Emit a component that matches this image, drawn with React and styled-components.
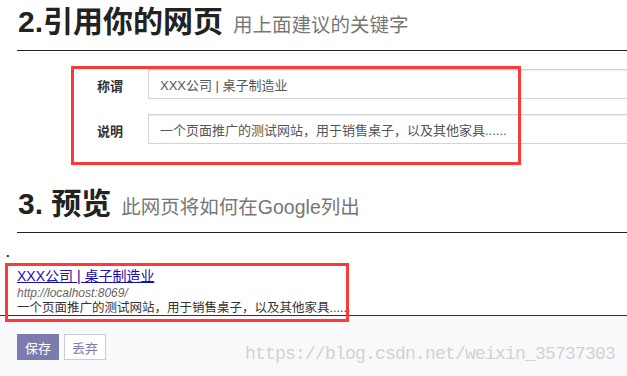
import React from 'react'
import styled, { createGlobalStyle } from 'styled-components'

const GlobalStyle = createGlobalStyle`
  html, body {
    margin: 0;
    padding: 0;
    background: #fff;
    overflow: hidden;
  }
  body {
    font-family: "Liberation Sans", "Noto Sans CJK SC", sans-serif;
    color: #333;
  }
`

const Page = styled.div`
  position: relative;
  min-height: 100vh;
  display: flex;
  flex-direction: column;
`

const Header = styled.h2`
  margin: ${p => p.$top || 0}px 0 0 17px;
  padding: 2px 0 8px 1px;
  height: 40px;
  font-size: 30px;
  line-height: 40px;
  font-weight: bold;
  color: #222;
  border-bottom: 1px solid #222;
  white-space: nowrap;
`

const Sub = styled.small`
  margin-left: 10px;
  font-size: 19.5px;
  line-height: 1;
  font-weight: normal;
  color: #777;
`

const Form = styled.div`
  margin: 18px -20px 0 97px;
  display: flex;
  flex-direction: column;
  gap: 15px;
`

const Row = styled.div`
  display: flex;
  align-items: flex-start;
`

const Label = styled.label`
  width: 51px;
  flex: none;
  padding-top: 9px;
  line-height: 18px;
  font-size: 13px;
  font-weight: bold;
  color: #333;
`

const Field = styled.input`
  flex: 1;
  height: 30px;
  box-sizing: border-box;
  border: 1px solid #d4d4d4;
  box-shadow: inset 0 1px 1px rgba(0, 0, 0, 0.07);
  padding: 0 11px;
  font-family: "Liberation Sans", "Noto Sans CJK SC", sans-serif;
  font-size: 13px;
  color: #555;
  background: #fff;
  outline: none;
`

const Preview = styled.div`
  padding-left: 17px;
  margin-top: 14px;
`

const Dot = styled.div`
  margin-left: -11px;
  font-size: 13px;
  font-weight: bold;
  line-height: 12px;
  color: #222;
`

const ResultTitle = styled.a`
  display: block;
  margin-top: 8px;
  font-size: 14px;
  line-height: 18px;
  color: #1a0dab;
  text-decoration: underline;
  white-space: nowrap;
`

const ResultUrl = styled.div`
  font-size: 12px;
  line-height: 16px;
  font-style: italic;
  color: #666;
`

const ResultDesc = styled.div`
  font-size: 12.5px;
  line-height: 14px;
  color: #333;
  white-space: nowrap;
`

const Footer = styled.div`
  flex: 1;
  border-top: 1px solid #333;
  background: #f9f9fb;
  padding: 18px 17px;
  display: flex;
  gap: 5px;
  align-items: flex-start;
`

const Button = styled.button`
  height: 26px;
  padding: 0 7px;
  font-family: "Liberation Sans", "Noto Sans CJK SC", sans-serif;
  font-size: 13px;
  border: 1px solid ${p => (p.$primary ? '#7c7bad' : '#ccc')};
  background: ${p => (p.$primary ? '#7c7bad' : '#fff')};
  color: ${p => (p.$primary ? '#fff' : '#7c7bad')};
  border-radius: 0;
  cursor: pointer;
`

const Mark = styled.div`
  position: absolute;
  border: 3px solid #fb3a3a;
  box-sizing: border-box;
  pointer-events: none;
`

const Watermark = styled.div`
  position: absolute;
  left: 245px;
  top: 343px;
  font-family: "Liberation Mono", monospace;
  font-size: 18px;
  letter-spacing: -0.8px;
  line-height: 22px;
  color: #d2d2d2;
  pointer-events: none;
`

const App = () => {
  return (
    <>
      <GlobalStyle />
      <Page>
        <Header>
          2.引用你的网页<Sub>用上面建议的关键字</Sub>
        </Header>
        <Form>
          <Row>
            <Label>称谓</Label>
            <Field readOnly defaultValue="XXX公司 | 桌子制造业" />
          </Row>
          <Row>
            <Label>说明</Label>
            <Field readOnly defaultValue="一个页面推广的测试网站，用于销售桌子，以及其他家具......" />
          </Row>
        </Form>

        <Header $top={38}>
          3. 预览<Sub>此网页将如何在Google列出</Sub>
        </Header>
        <Preview>
          <Dot>.</Dot>
          <ResultTitle href="#">XXX公司 | 桌子制造业</ResultTitle>
          <ResultUrl>http://localhost:8069/</ResultUrl>
          <ResultDesc>一个页面推广的测试网站，用于销售桌子，以及其他家具......</ResultDesc>
        </Preview>

        <Footer>
          <Button $primary>保存</Button>
          <Button>丢弃</Button>
        </Footer>

        <Mark style={{ left: 71, top: 66, width: 450, height: 99 }} />
        <Mark style={{ left: 5, top: 263, width: 344, height: 59 }} />
        <Watermark>https://blog.csdn.net/weixin_35737303</Watermark>
      </Page>
    </>
  )
}

export default App
